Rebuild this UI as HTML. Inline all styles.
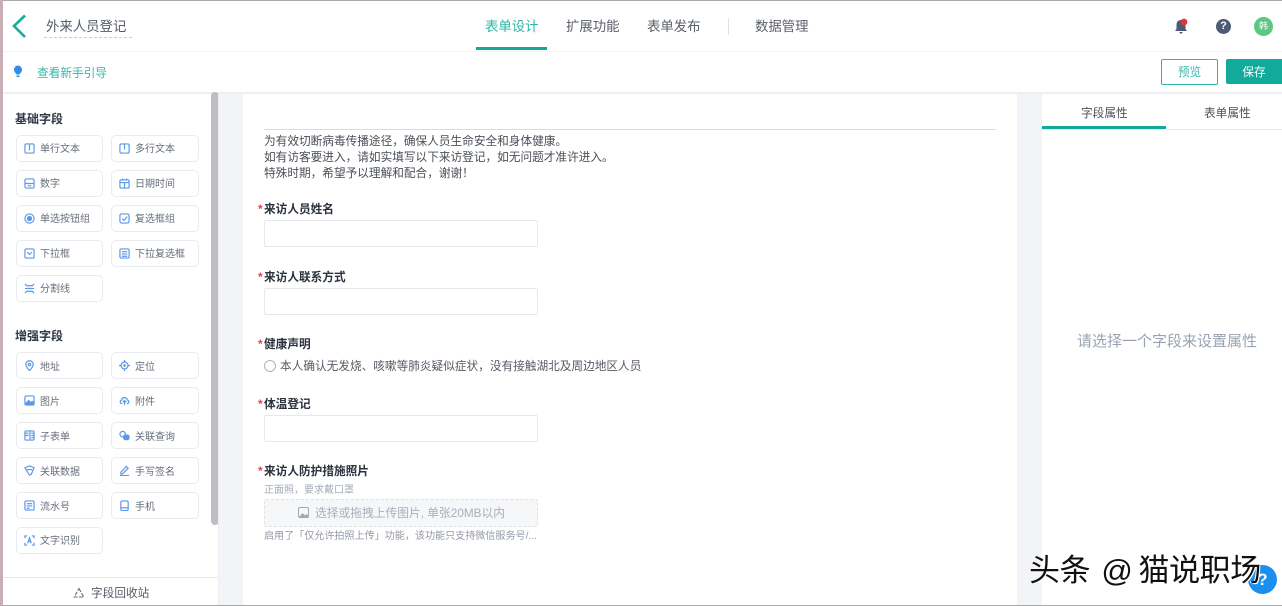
<!DOCTYPE html>
<html lang="zh"><head><meta charset="utf-8">
<style>
html,body{margin:0;padding:0;width:1282px;height:606px;overflow:hidden;background:#fff}
body{position:relative;font-family:"Liberation Sans","Noto Sans CJK SC",sans-serif;color:#5a6270}
.a{position:absolute;white-space:nowrap}
.btn{position:absolute;width:86px;height:24.500px;border:1px solid #e8ebf0;border-radius:5px;background:#fff;font-size:10px;line-height:26px;color:#666e7a;box-sizing:content-box}
.btn[style^="left:16"]{width:85px}
.btn span{position:absolute;left:23px;top:1px}
.btn.e span{top:2px}
.btn svg{position:absolute;left:7px;top:6.500px;width:11px;height:11px;fill:none;stroke:#5c98e8;stroke-width:1.300}
.lab{position:absolute;left:258px;font-size:11.670px;font-weight:bold;color:#2b323d;line-height:16px;white-space:nowrap;margin-top:1px}
.lab i{color:#d9484f;font-style:normal;font-weight:bold;display:inline-block;width:6px;font-size:12px}
.inp{position:absolute;left:264px;width:272px;height:25px;border:1px solid #e6e8ec;border-radius:2px;background:#fff}
.h{position:absolute;left:15px;font-size:12px;font-weight:bold;color:#2f3744;line-height:16px}
.t{font-size:13.400px;line-height:20px;color:#5a5f67}
</style></head><body>
<!-- header -->
<div class="a" style="left:0;top:51px;width:1282px;height:1px;background:#f3f4f6"></div>
<div class="a" style="left:0;top:92px;width:1282px;height:2px;background:#eeeff1"></div>
<svg class="a" style="left:10px;top:13px" width="18" height="26" viewBox="0 0 18 26"><path d="M15 2.500 L4 13 L15 24" fill="none" stroke="#12ae9c" stroke-width="2.600"/></svg>
<div class="a t" style="left:46px;top:17px;color:#555c66">外来人员登记</div>
<div class="a" style="left:44px;top:37px;width:88px;border-top:1px dashed #c9ccd1"></div>
<div class="a t" style="left:485px;top:17px;color:#2fb4a6">表单设计</div>
<div class="a" style="left:476px;top:47px;width:71px;height:3px;background:#12a99a"></div>
<div class="a t" style="left:566px;top:17px">扩展功能</div>
<div class="a t" style="left:647px;top:17px">表单发布</div>
<div class="a" style="left:728px;top:18px;width:1px;height:17px;background:#dfe1e4"></div>
<div class="a t" style="left:755px;top:17px">数据管理</div>
<svg class="a" style="left:1172px;top:16px" width="20" height="20" viewBox="0 0 20 20"><path d="M9 4C6 4 4.500 6 4.500 9V13L3 15H15L13.500 13V9C13.500 6 12 4 9 4Z" fill="#4c5b73"/><path d="M7 16H11L9 18Z" fill="#4c5b73"/><circle cx="12" cy="6" r="3.400" fill="#e8343c"/></svg>
<div class="a" style="left:1216px;top:19px;width:15px;height:15px;border-radius:50%;background:#4d5c76;color:#fff;font-size:11px;font-weight:bold;line-height:15px;text-align:center">?</div>
<div class="a" style="left:1254px;top:17px;width:19px;height:19px;border-radius:50%;background:#5cc77f;color:#fff;font-size:9px;line-height:19px;text-align:center">韩</div>
<!-- sub bar -->
<svg class="a" style="left:12px;top:65px" width="12" height="14" viewBox="0 0 12 14"><path d="M6 .500A4.200 4.200 0 0 1 10 5C10 6.500 8.500 8 7.500 9.500H4.500C3.500 8 2 6.500 2 5A4.200 4.200 0 0 1 6 .500Z" fill="#2f8fe8"/><path d="M4.500 10.500H7.500V12H4.500Z" fill="#2f8fe8"/></svg>
<div class="a" style="left:37px;top:65px;font-size:11.670px;line-height:17px;color:#35b7aa">查看新手引导</div>
<div class="a" style="left:1161px;top:59px;width:55px;height:24px;border:1px solid #2fb3a4;border-radius:2px;background:#fff;color:#3cb8aa;font-size:11.670px;line-height:26px;text-align:center">预览</div>
<div class="a" style="left:1226px;top:59px;width:56px;height:25px;background:#12ab9b;border-radius:2px 0 0 2px;color:#fff;font-size:11.670px;line-height:27px;text-align:center">保存</div>
<!-- center bg -->
<div class="a" style="left:219px;top:94px;width:24px;height:511px;background:#f3f4f8"></div>
<div class="a" style="left:1017px;top:94px;width:25px;height:511px;background:#f3f4f8"></div>
<div class="a" style="left:211px;top:92px;width:8px;height:433px;background:#bdbec2;border-radius:4px"></div>
<div class="a" style="left:218px;top:94px;width:1px;height:511px;background:#ecedf0"></div>
<!-- sidebar -->
<div class="h" style="top:111px">基础字段</div>
<div class="btn" style="left:16px;top:135px"><svg viewBox="0 0 12 12"><rect x="1" y="1" width="10" height="10" rx="1.500"/><path d="M6 1V8"/></svg><span>单行文本</span></div>
<div class="btn" style="left:111px;top:135px"><svg viewBox="0 0 12 12"><rect x="1" y="1" width="10" height="10" rx="1.500"/><path d="M6 1V7"/></svg><span>多行文本</span></div>
<div class="btn" style="left:16px;top:170px"><svg viewBox="0 0 12 12"><rect x="1" y="1" width="10" height="10" rx="1.500"/><path d="M1 6H11M4 8.500H8"/></svg><span>数字</span></div>
<div class="btn" style="left:111px;top:170px"><svg viewBox="0 0 12 12"><rect x="1" y="2" width="10" height="9" rx="1.500"/><path d="M1 5H11M4 .500V3M8 .500V3M6 5V11"/></svg><span>日期时间</span></div>
<div class="btn" style="left:16px;top:205px"><svg viewBox="0 0 12 12"><circle cx="6" cy="6" r="5"/><circle cx="6" cy="6" r="2.200" fill="#5c98e8"/></svg><span>单选按钮组</span></div>
<div class="btn" style="left:111px;top:205px"><svg viewBox="0 0 12 12"><rect x="1" y="1" width="10" height="10" rx="2"/><path d="M3.500 6L5.500 8L9 4"/></svg><span>复选框组</span></div>
<div class="btn" style="left:16px;top:240px"><svg viewBox="0 0 12 12"><rect x="1" y="1" width="10" height="10" rx="1.500"/><path d="M3.500 4.500L6 7L8.500 4.500"/></svg><span>下拉框</span></div>
<div class="btn" style="left:111px;top:240px"><svg viewBox="0 0 12 12"><rect x="1" y="1" width="10" height="10" rx="1.500"/><path d="M3 4H9M3 6.500H9M3 9H9"/></svg><span>下拉复选框</span></div>
<div class="btn" style="left:16px;top:275px"><svg viewBox="0 0 12 12"><path d="M1 1L3 3H9L11 1M1 11L3 9H9L11 11M1 6H11"/></svg><span>分割线</span></div>
<div class="h" style="top:328px">增强字段</div>
<div class="btn e" style="left:16px;top:352px"><svg viewBox="0 0 12 12"><path d="M6 11.500C3 8.500 2 6.500 2 4.800A4 4 0 0 1 10 4.800C10 6.500 9 8.500 6 11.500Z"/><circle cx="6" cy="5" r="1.300"/></svg><span>地址</span></div>
<div class="btn e" style="left:111px;top:352px"><svg viewBox="0 0 12 12"><circle cx="6" cy="6" r="3.800"/><path d="M6 0V2M6 10V12M0 6H2M10 6H12"/><circle cx="6" cy="6" r=".8" fill="#5c98e8"/></svg><span>定位</span></div>
<div class="btn e" style="left:16px;top:387px"><svg viewBox="0 0 12 12"><rect x="1" y="1" width="10" height="10" rx="1.500"/><path d="M1.500 10L5 6L7.500 8.500L9 7L10.500 8.500V10.500H1.500Z" fill="#5c98e8"/></svg><span>图片</span></div>
<div class="btn e" style="left:111px;top:387px"><svg viewBox="0 0 12 12"><path d="M3.500 9.500C1 9.500 .5 6 3 5.500C3.500 2 8.500 2 9 5.500C11.500 6 11 9.500 8.500 9.500"/><path d="M4 8L6 6L8 8M6 6V11"/></svg><span>附件</span></div>
<div class="btn e" style="left:16px;top:422px"><svg viewBox="0 0 12 12"><rect x="1" y="1" width="10" height="10" rx="1"/><path d="M6.500 1V11M8 3.500H11M8 6H11M8 8.500H11M1 3.500H5M1 6H5"/></svg><span>子表单</span></div>
<div class="btn e" style="left:111px;top:422px"><svg viewBox="0 0 12 12"><circle cx="4" cy="4.500" r="3"/><rect x="5" y="5.500" width="6" height="5" rx="2" fill="#5c98e8"/></svg><span>关联查询</span></div>
<div class="btn e" style="left:16px;top:457px"><svg viewBox="0 0 12 12"><path d="M1 3L6 1L11 3L8 10L6 11L4 8Z"/><path d="M3 5H9"/></svg><span>关联数据</span></div>
<div class="btn e" style="left:111px;top:457px"><svg viewBox="0 0 12 12"><path d="M2 8L8 1.500L10 3.500L4 9.500L2 10Z"/><path d="M1 11.500H11"/></svg><span>手写签名</span></div>
<div class="btn e" style="left:16px;top:492px"><svg viewBox="0 0 12 12"><rect x="1" y="1" width="10" height="10" rx="1.500"/><path d="M3 4H9M3 6.500H9M3 9H6"/></svg><span>流水号</span></div>
<div class="btn e" style="left:111px;top:492px"><svg viewBox="0 0 12 12"><rect x="2" y="1" width="8" height="10.500" rx="1.500"/><path d="M2 8.500H10"/></svg><span>手机</span></div>
<div class="btn" style="left:16px;top:527px"><svg viewBox="0 0 12 12"><path d="M1 3.500V1H3.500M8.500 1H11V3.500M1 8.500V11H3.500M8.500 11H11V8.500M4 9L6 3L8 9M4.700 7H7.300"/></svg><span>文字识别</span></div>
<div class="a" style="left:3px;top:577px;width:215px;height:1px;background:#e6e7ea"></div>
<svg class="a" style="left:73px;top:587px" width="12" height="12" viewBox="0 0 12 12"><path d="M6 1.500L10.800 10H1.200Z" fill="none" stroke="#666c76" stroke-width="1.100" stroke-dasharray="4 1.300"/></svg>
<div class="a" style="left:91px;top:585px;font-size:11.670px;line-height:17px;color:#555c66">字段回收站</div>
<!-- form -->
<div class="a" style="left:264px;top:129px;width:732px;height:1px;background:#d9dbde"></div>
<div class="a" style="left:264px;top:134px;font-size:11.670px;line-height:16px;color:#4a4f57">为有效切断病毒传播途径，确保人员生命安全和身体健康。<br>如有访客要进入，请如实填写以下来访登记，如无问题才准许进入。<br>特殊时期，希望予以理解和配合，谢谢！</div>
<div class="lab" style="top:200px"><i>*</i>来访人员姓名</div>
<div class="inp" style="top:220px"></div>
<div class="lab" style="top:268px"><i>*</i>来访人联系方式</div>
<div class="inp" style="top:288px"></div>
<div class="lab" style="top:335px"><i>*</i>健康声明</div>
<div class="a" style="left:264px;top:360px;width:10px;height:10px;border:1px solid #aeb3ba;border-radius:50%"></div>
<div class="a" style="left:280px;top:358px;font-size:11.670px;line-height:17px;color:#555b64">本人确认无发烧、咳嗽等肺炎疑似症状，没有接触湖北及周边地区人员</div>
<div class="lab" style="top:395px"><i>*</i>体温登记</div>
<div class="inp" style="top:415px"></div>
<div class="lab" style="top:462px"><i>*</i>来访人防护措施照片</div>
<div class="a" style="left:264px;top:483px;font-size:10px;line-height:15px;color:#a4acb8">正面照，要求戴口罩</div>
<div class="a" style="left:264px;top:499px;width:272px;height:26px;border:1px dashed #e0e2e6;background:#f6f7f8;border-radius:2px"></div>
<svg class="a" style="left:298px;top:507px" width="11" height="11" viewBox="0 0 11 11"><rect x=".5" y=".5" width="10" height="10" rx="1.500" fill="none" stroke="#a0a7b5"/><path d="M1 10L4.500 6L7 8.500L8.500 7L10 8.500V10Z" fill="#a0a7b5"/></svg>
<div class="a" style="left:315px;top:505px;font-size:11.750px;line-height:17px;color:#a9afba">选择或拖拽上传图片, 单张20MB以内</div>
<div class="a" style="left:264px;top:529px;font-size:10.070px;line-height:15px;color:#9299a4">启用了「仅允许拍照上传」功能，该功能只支持微信服务号/...</div>
<!-- right panel -->
<div class="a" style="left:1081px;top:105px;font-size:11.670px;line-height:17px;color:#4c5159">字段属性</div>
<div class="a" style="left:1204px;top:105px;font-size:11.670px;line-height:17px;color:#4c5159">表单属性</div>
<div class="a" style="left:1042px;top:129px;width:240px;height:1px;background:#e8e9ec"></div>
<div class="a" style="left:1042px;top:126px;width:124px;height:3px;background:#12a99a"></div>
<div class="a" style="left:1077px;top:331px;font-size:15px;line-height:21px;color:#9aa3b2">请选择一个字段来设置属性</div>
<!-- float help + watermark -->
<div class="a" style="left:1248px;top:565px;width:29px;height:29px;border-radius:50%;background:#1b8ff0;color:#fff;font-size:17px;font-weight:bold;line-height:29px;text-align:center">?</div>
<div class="a" style="left:1029px;top:552px;font-size:31px;line-height:38px;color:#111;letter-spacing:-.4px;word-spacing:3px;text-shadow:1px 1px 0 #fff,-1px 0 0 #fff">头条 @<span style="margin-left:6px">猫说职场</span></div>
<!-- screenshot edges -->
<div class="a" style="left:0;top:0;width:1282px;height:1px;background:#a9a9a9"></div>
<div class="a" style="left:0;top:605px;width:1282px;height:1px;background:#a9a9a9"></div>
<div class="a" style="left:0;top:0;width:3px;height:606px;background:#c9aeb4"></div>
</body></html>
